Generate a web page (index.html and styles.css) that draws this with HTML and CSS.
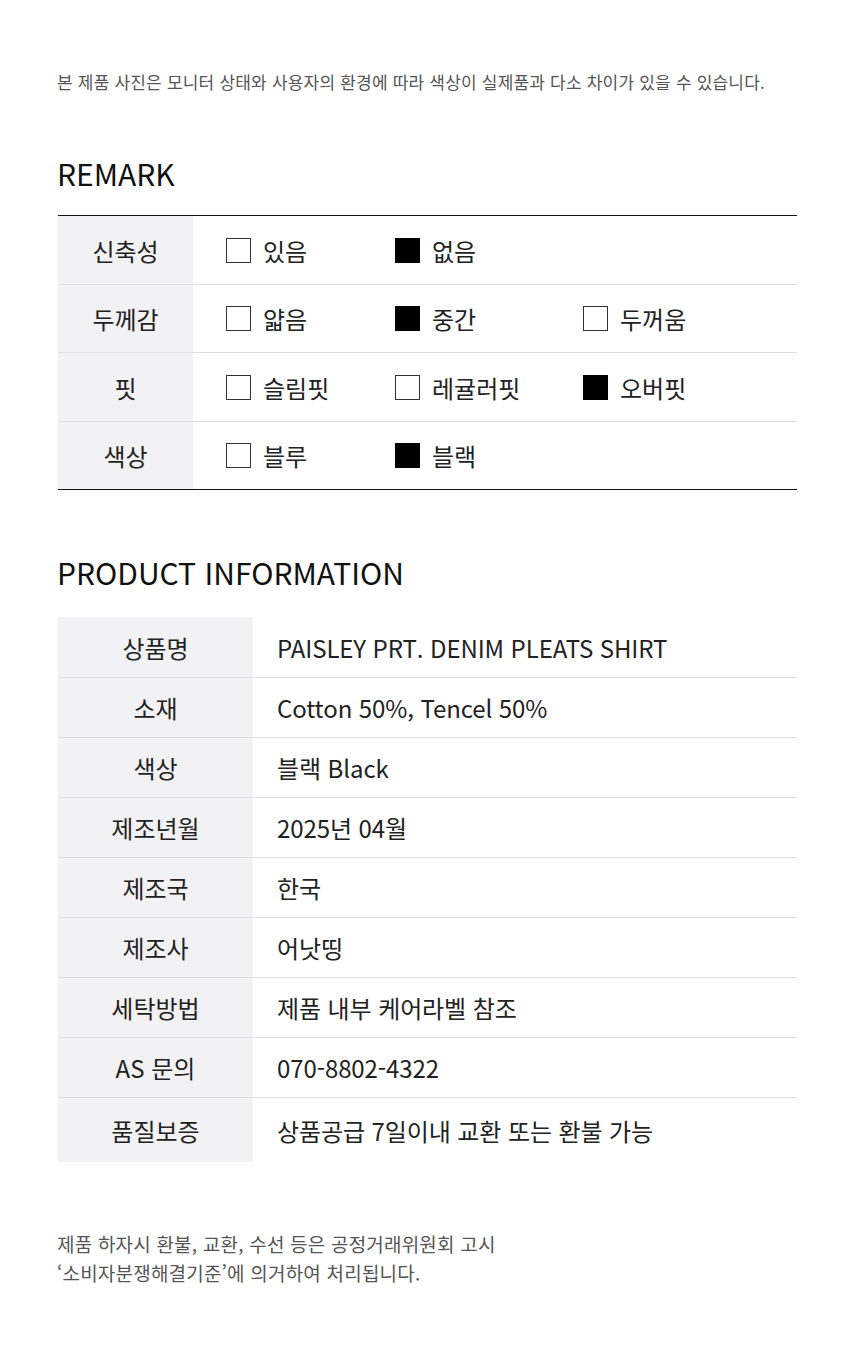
FILE: index.html
```html
<!DOCTYPE html>
<html lang="ko">
<head>
<meta charset="utf-8">
<link rel="stylesheet" href="styles.css">
</head>
<body>
<div class="page">
  <p class="note">본 제품 사진은 모니터 상태와 사용자의 환경에 따라 색상이 실제품과 다소 차이가 있을 수 있습니다.</p>

  <h2 class="heading remark-heading">REMARK</h2>
  <div class="remark">
    <div class="r-row">
      <div class="r-label">신축성</div>
      <div class="r-opts">
        <span class="opt"><i class="box"></i>있음</span>
        <span class="opt"><i class="box on"></i>없음</span>
      </div>
    </div>
    <div class="r-row">
      <div class="r-label">두께감</div>
      <div class="r-opts">
        <span class="opt"><i class="box"></i>얇음</span>
        <span class="opt"><i class="box on"></i>중간</span>
        <span class="opt"><i class="box"></i>두꺼움</span>
      </div>
    </div>
    <div class="r-row">
      <div class="r-label">핏</div>
      <div class="r-opts">
        <span class="opt"><i class="box"></i>슬림핏</span>
        <span class="opt"><i class="box"></i>레귤러핏</span>
        <span class="opt"><i class="box on"></i>오버핏</span>
      </div>
    </div>
    <div class="r-row">
      <div class="r-label">색상</div>
      <div class="r-opts">
        <span class="opt"><i class="box"></i>블루</span>
        <span class="opt"><i class="box on"></i>블랙</span>
      </div>
    </div>
  </div>

  <h2 class="heading info-heading">PRODUCT INFORMATION</h2>
  <div class="info">
    <div class="i-row"><div class="i-label">상품명</div><div class="i-val">PAISLEY PRT. DENIM PLEATS SHIRT</div></div>
    <div class="i-row"><div class="i-label">소재</div><div class="i-val">Cotton 50%, Tencel 50%</div></div>
    <div class="i-row"><div class="i-label">색상</div><div class="i-val">블랙 Black</div></div>
    <div class="i-row"><div class="i-label">제조년월</div><div class="i-val">2025년 04월</div></div>
    <div class="i-row"><div class="i-label">제조국</div><div class="i-val">한국</div></div>
    <div class="i-row"><div class="i-label">제조사</div><div class="i-val">어낫띵</div></div>
    <div class="i-row"><div class="i-label">세탁방법</div><div class="i-val">제품 내부 케어라벨 참조</div></div>
    <div class="i-row"><div class="i-label">AS 문의</div><div class="i-val">070-8802-4322</div></div>
    <div class="i-row last"><div class="i-label">품질보증</div><div class="i-val">상품공급 7일이내 교환 또는 환불 가능</div></div>
  </div>

  <p class="footer">제품 하자시 환불, 교환, 수선 등은 공정거래위원회 고시<br>‘소비자분쟁해결기준’에 의거하여 처리됩니다.</p>
</div>
</body>
</html>
```

FILE: styles.css
```css
* { box-sizing: border-box; }
html, body { margin: 0; padding: 0; background: #fff; }
body {
  font-family: "Noto Sans CJK KR", "Noto Sans", sans-serif;
  color: #222;
}
.page {
  width: 860px;
  padding: 70px 63px 60px 57px;
}
.note {
  margin: 0;
  font-size: 17px;
  letter-spacing: 0.2px;
  line-height: 24px;
  color: #555;
}
.heading {
  margin: 0;
  font-weight: 400;
  font-size: 30px;
  line-height: 40px;
  color: #111;
}
.remark-heading { margin-top: 59px; margin-bottom: 22px; }
.remark {
  margin-left: 1px;
  border-top: 1px solid #111;
  border-bottom: 1px solid #111;
}
.r-row {
  display: flex;
  height: 69px;
  border-bottom: 1px solid #ddd;
}
.r-row:nth-child(2) { height: 68px; }
.r-row:last-child { border-bottom: none; height: 67px; }
.r-label {
  width: 135px;
  background: #f2f2f4;
  display: flex;
  align-items: center;
  justify-content: center;
  font-size: 24px;
}
.r-opts {
  flex: 1;
  display: grid;
  grid-template-columns: 169px 188px auto;
  align-items: center;
  padding-left: 33px;
}
.opt {
  display: flex;
  align-items: center;
  gap: 12px;
  font-size: 24px;
}
.box {
  display: block;
  width: 25px;
  height: 25px;
  border: 1px solid #333;
  background: #fff;
}
.box.on { background: #000; border-color: #000; }
.info-heading { margin-top: 62px; margin-bottom: 25px; }
.info { margin-left: 1px; }
.i-row {
  display: flex;
  height: 60px;
  border-bottom: 1px solid #ddd;
}
.i-row:first-child { height: 61px; }
.i-row.last { border-bottom: none; height: 64px; }
.i-label {
  width: 195px;
  background: #f2f2f4;
  display: flex;
  align-items: center;
  justify-content: center;
  font-size: 24px;
}
.i-val {
  flex: 1;
  display: flex;
  align-items: center;
  padding-left: 24px;
  font-size: 24px;
  letter-spacing: -0.1px;
}
.footer {
  margin: 67px 0 0;
  font-size: 19px;
  letter-spacing: 0.2px;
  line-height: 29px;
  color: #555;
}
```
